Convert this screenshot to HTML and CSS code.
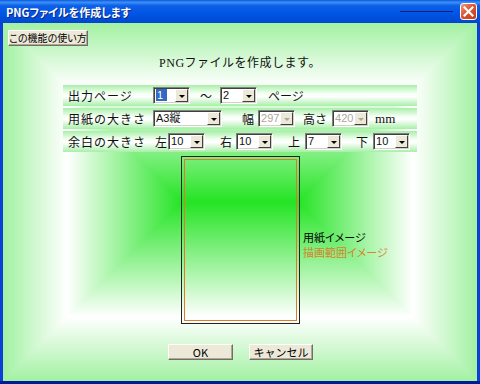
FILE: index.html
```html
<!DOCTYPE html>
<html lang="ja">
<head>
    <meta charset="UTF-8">
    <title>PNGファイルを作成します</title>
    <link rel="stylesheet" href="styles.css">
</head>
<body>
<div class="window">
    <div class="titlebar">
        <span class="title">PNGファイルを作成します</span>
        <span class="bar-line"></span>
        <span class="close">
            <svg width="11" height="11" viewBox="0 0 11 11"><path d="M1.5 1.5 L9.5 9.5 M9.5 1.5 L1.5 9.5" stroke="#fff" stroke-width="2.2" stroke-linecap="square"/></svg>
        </span>
    </div>

    <div class="client">
        <div class="content">
            <div class="btn help">この機能の使い方</div>
            <div class="heading">PNGファイルを作成します。</div>

            <div class="rows">
                <div class="row">
                    <span class="label">出力ページ</span>
                    <div class="combo w37"><span class="val"><span class="sel">1</span></span><span class="arrow"></span></div>
                    <span class="txt m10">～</span>
                    <div class="combo w37 m8"><span class="val">2</span><span class="arrow"></span></div>
                    <span class="txt m11">ページ</span>
                </div>
                <div class="row">
                    <span class="label">用紙の大きさ</span>
                    <div class="combo w69"><span class="val">A3縦</span><span class="arrow"></span></div>
                    <span class="txt m20">幅</span>
                    <div class="combo w37 m4 disabled"><span class="val">297</span><span class="arrow"></span></div>
                    <span class="txt m8">高さ</span>
                    <div class="combo w37 m5 disabled"><span class="val">420</span><span class="arrow"></span></div>
                    <span class="txt unit">mm</span>
                </div>
                <div class="row">
                    <span class="label">余白の大きさ</span>
                    <span class="txt m2">左</span>
                    <div class="combo w37 m1"><span class="val">10</span><span class="arrow"></span></div>
                    <span class="txt m15">右</span>
                    <div class="combo w37 m4"><span class="val">10</span><span class="arrow"></span></div>
                    <span class="txt m15">上</span>
                    <div class="combo w37 m5"><span class="val">7</span><span class="arrow"></span></div>
                    <span class="txt m14">下</span>
                    <div class="combo w37 m5"><span class="val">10</span><span class="arrow"></span></div>
                </div>
            </div>

            <div class="preview">
                <div class="paper"><div class="area"></div></div>
                <div class="legend">
                    <div class="paper-label">用紙イメージ</div>
                    <div class="area-label">描画範囲イメージ</div>
                </div>
            </div>

            <div class="buttons">
                <div class="btn ok">OK</div>
                <div class="btn cancel">キャンセル</div>
            </div>
        </div>
    </div>
</div>
</body>
</html>
```

FILE: styles.css
```css
body{
    margin:0;
    font-family:"Noto Sans CJK JP", "DejaVu Sans", sans-serif;
}
.window{
    width:480px;
    height:384px;
    display:flex;
    flex-direction:column;
    background:#0b3fd8;
    border-bottom:3px solid #001c94;
    box-sizing:border-box;
}

/* title bar */
.titlebar{
    height:23px;
    display:flex;
    align-items:center;
    padding:0 3px 0 6px;
    background:linear-gradient(#0a5bdc, #3d8ff8 10%, #0c5fe6 25%, #0055e5 60%, #0047cf 100%);
    flex-shrink:0;
}
.title{
    color:#fff;
    font-size:11px;
    font-weight:bold;
    font-feature-settings:"palt";
    text-shadow:1px 1px 0 #0a2a8a;
    line-height:14px;
}
.bar-line{
    margin-left:auto;
    margin-right:7px;
    width:53px;
    height:1px;
    background:#0a1f7a;
}
.close{
    width:17px;
    height:17px;
    box-sizing:border-box;
    border:1px solid #fff;
    border-radius:3px;
    background:linear-gradient(135deg, #f09a80, #e0552f 45%, #c43a14);
    display:flex;
    align-items:center;
    justify-content:center;
}

/* client area: rectangular gradient, 45deg seams */
.client{
    flex:1;
    margin:0 3px;
    position:relative;
    background:linear-gradient(to right, #a2f1a2 0, #ffffff 64px, #24e424 179px, #24e424 calc(100% - 179px), #ffffff calc(100% - 64px), #a2f1a2 100%);
}
.client::before{
    content:"";
    position:absolute;
    inset:0;
    background:linear-gradient(to bottom, #a2f1a2 0, #ffffff 64px, #24e424 50%, #ffffff calc(100% - 64px), #a2f1a2 100%);
    clip-path:polygon(0 0, 100% 0, calc(100% - 179px) 50%, 100% 100%, 0 100%, 179px 50%);
}
.content{
    position:relative;
    display:flex;
    flex-direction:column;
    align-items:flex-start;
    padding-top:7px;
}

/* buttons */
.btn{
    box-sizing:border-box;
    height:16px;
    background:#ece9d8;
    border:1px solid;
    border-color:#fff #716f64 #716f64 #fff;
    box-shadow:inset -1px -1px 0 #aca899;
    font-size:11px;
    line-height:14px;
    text-align:center;
    white-space:nowrap;
    color:#000;
}
.help{
    margin-left:5px;
    width:80px;
    font-size:10px;
    font-feature-settings:"palt";
}
.heading{
    align-self:center;
    margin-top:9px;
    font-family:"Liberation Serif", "Noto Sans CJK JP", serif;
    font-size:12px;
    line-height:16px;
    letter-spacing:0.5px;
    color:#111;
}

/* form rows */
.rows{
    margin-top:14px;
    margin-left:60px;
    width:354px;
    display:flex;
    flex-direction:column;
    gap:2px;
}
.row{
    height:21px;
    display:flex;
    align-items:center;
    padding-left:5px;
    background:linear-gradient(#a8efa8, #f4fff4 40%, #ffffff 55%, #a8efa8);
    font-size:12px;
    color:#111;
}
.label{
    width:85px;
    letter-spacing:1px;
}
.txt{
    line-height:16px;
}
.unit{
    margin-left:6px;
    font-family:"Liberation Serif", serif;
    font-size:13px;
}
.m1{margin-left:1px;}
.m2{margin-left:2px;}
.m4{margin-left:4px;}
.m5{margin-left:5px;}
.m8{margin-left:8px;}
.m10{margin-left:10px;}
.m11{margin-left:11px;}
.m14{margin-left:14px;}
.m15{margin-left:15px;}
.m20{margin-left:20px;}

.combo{
    box-sizing:border-box;
    height:17px;
    display:flex;
    background:#fff;
    border:1px solid;
    border-color:#808080 #fff #fff #808080;
    box-shadow:inset 1px 1px 0 #404040, inset -1px -1px 0 #d4d0c8;
    padding:1px;
    font-family:"Liberation Sans", "Noto Sans CJK JP", sans-serif;
    font-size:11px;
}
.w37{width:37px;}
.w69{width:69px;}
.val{
    flex:1;
    line-height:13px;
    padding-left:1px;
    overflow:hidden;
}
.sel{
    background:#316ac5;
    color:#fff;
    padding:0 4px 0 1px;
}
.arrow{
    width:13px;
    box-sizing:border-box;
    background:#ece9d8;
    border:1px solid;
    border-color:#fff #404040 #404040 #fff;
    display:flex;
    align-items:center;
    justify-content:center;
}
.arrow::after{
    content:"";
    border-left:3px solid transparent;
    border-right:3px solid transparent;
    border-top:3px solid #000;
    margin-top:1px;
}
.disabled .val{
    color:#aca899;
}
.disabled .arrow::after{
    border-top-color:#aca899;
}

/* preview */
.preview{
    margin-top:4px;
    margin-left:178px;
    display:flex;
}
.paper{
    box-sizing:border-box;
    width:119px;
    height:168px;
    border:1px solid #222;
    padding:2px;
}
.area{
    height:100%;
    box-sizing:border-box;
    border:1px solid #e07a2a;
}
.legend{
    margin-left:3px;
    margin-top:74px;
    font-size:11px;
    line-height:15px;
    font-feature-settings:"palt";
}
.paper-label{
    color:#000;
}
.area-label{
    color:#d8842c;
}

.buttons{
    align-self:center;
    margin-top:20px;
    margin-left:1px;
    display:flex;
    gap:16px;
}
.ok{width:65px;}
.cancel{width:64px;}
```
